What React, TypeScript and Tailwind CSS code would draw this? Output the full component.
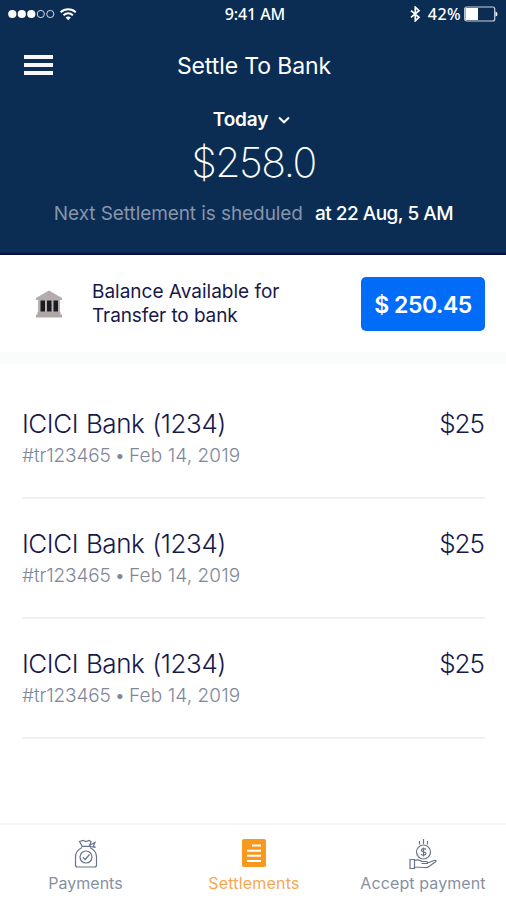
import React from "react";

const transactions = [
  { id: 1, bank: "ICICI Bank (1234)", reference: "#tr123465 •", date: "Feb 14, 2019", amount: "$25" },
  { id: 2, bank: "ICICI Bank (1234)", reference: "#tr123465 •", date: "Feb 14, 2019", amount: "$25" },
  { id: 3, bank: "ICICI Bank (1234)", reference: "#tr123465 •", date: "Feb 14, 2019", amount: "$25" },
];

function StatusBar() {
  return (
    <div className="grid h-7 grid-cols-3 items-center pr-2 pl-2 font-['Noto_Sans',sans-serif]">
      <div className="flex items-center">
        <svg width="70" height="16" viewBox="0 0 70 16" fill="none">
          <g fill="#fff">
            <circle cx="4.3" cy="8" r="4.1" />
            <circle cx="13.8" cy="8" r="4.1" />
            <circle cx="23.3" cy="8" r="4.1" />
          </g>
          <g stroke="#d5dce6" strokeWidth="1">
            <circle cx="32.8" cy="8" r="3.6" />
            <circle cx="42.3" cy="8" r="3.6" />
          </g>
          <g stroke="#fff" strokeWidth="2">
            <path d="M52.6 6.2c4.4-4 10.800-4 15.200 0" />
            <path d="M55.500 9.200c2.800-2.500 6.600-2.500 9.400 0" />
          </g>
          <path d="M57.600 11.400c1.500-1.300 3.700-1.300 5.200 0L60.200 14.300z" fill="#fff" />
        </svg>
      </div>
      <span className="pl-1 text-center text-[16px] leading-7 font-medium tracking-[-0.1px] whitespace-nowrap">9:41 AM</span>
      <div className="flex items-center justify-end">
        <svg width="11" height="16" viewBox="0 0 11 16" fill="none" stroke="#fff" strokeWidth="1.700" className="mr-[7px]">
          <path d="M1 4.600L9 11.300L5.300 14.800V1.200L9 4.600L1 11.300" />
        </svg>
        <span className="mr-[3px] text-[16px] leading-7 font-medium tracking-[0.4px]">42%</span>
        <svg width="34" height="16" viewBox="0 0 34 16" fill="none">
          <rect x="0.700" y="1" width="30" height="14" rx="2" stroke="#cbd3de" strokeWidth="1.200" />
          <rect x="1.500" y="2" width="12.500" height="12" fill="#fff" />
          <path d="M31.500 5.500q2 .5 2 2.500t-2 2.500z" fill="#fff" />
        </svg>
      </div>
    </div>
  );
}

function Header() {
  return (
    <header className="flex h-[255px] flex-col border-b-2 border-[#0a0f45] bg-[#0c2d53] text-white">
      <StatusBar />
      <div className="mt-5 grid h-9 grid-cols-[1fr_auto_1fr] items-center px-6">
        <button aria-label="Menu" className="flex w-[29px] flex-col gap-1 pb-0.5">
          <span className="h-1 bg-[#f8f8fc]" />
          <span className="h-1 bg-[#f8f8fc]" />
          <span className="h-1 bg-[#f8f8fc]" />
        </button>
        <h1 className="pl-0.5 text-[23px] leading-9 tracking-[-0.1px]">Settle To Bank</h1>
      </div>
      <button className="mt-6 flex h-6 items-center justify-center gap-[10px] pr-[3px] text-[19px] font-semibold">
        <span className="tracking-[-0.2px]">Today</span>
        <svg width="12" height="8" viewBox="0 0 12 8" fill="none" stroke="#fff" strokeWidth="2">
          <path d="M1 1.500L6 6.300L11 1.500" />
        </svg>
      </button>
      <p className="mt-[7px] pl-px text-center text-[41px] leading-[46px] font-extralight tracking-[-1.5px]">$258.0</p>
      <p className="mt-[15px] flex justify-center gap-3 pl-px text-[19px] leading-7">
        <span className="tracking-[-0.08px] text-[#8794ab]">Next Settlement is sheduled</span>
        <span className="font-medium tracking-[-0.5px]">at 22 Aug, 5 AM</span>
      </p>
    </header>
  );
}

function BankIcon() {
  return (
    <svg width="28" height="28" viewBox="0 0 28 28" className="ml-[11px]">
      <path d="M14 .5L27 8v2H1V8z" fill="#b3abac" />
      <path d="M3 10h22v14H3z" fill="#b9b1b1" />
      <path d="M5.500 10.500h4.500v11h-4.500zM12 10.500h4.500v11h-4.500zM18.500 10.500h4.500v11h-4.500z" fill="#191b20" />
      <path d="M2.500 22h23v2.500H27V27.500H1v-3h1.500z" fill="#b0a6a8" />
    </svg>
  );
}

function Balance() {
  return (
    <section className="flex h-[97px] items-center pr-[21px] pl-6">
      <BankIcon />
      <p className="ml-[29px] flex-1 text-[19px] leading-6 text-[#17194b]">
        Balance Available for
        <br />
        <span className="tracking-[-0.1px]">Transfer to bank</span>
      </p>
      <button className="h-[54px] w-[124px] rounded-[5px] bg-[#006cf7] pt-1 text-[23px] font-semibold tracking-[-0.45px] text-white">
        $ 250.45
      </button>
    </section>
  );
}

function PaymentsIcon() {
  return (
    <svg width="24" height="30" viewBox="0 0 24 30" fill="none" stroke="#67748a" strokeWidth="1.200">
      <path d="M8 7L5.500 2.500L9 1.500L12 2.500L15 1.500L17 2.500L15.500 7M7.500 7.300h9M16 6l5-2.500-1.500 3.500 2 1.500-5-1" />
      <path d="M8 8.500C4 10.500 1.500 14 1.500 18v8q0 2 2 2h17q2 0 2-2v-8c0-4-2.500-7.500-6.500-9.500" />
      <circle cx="12" cy="18" r="6" />
      <path d="M9 18.300l2.200 2.200L15.500 15.500" />
    </svg>
  );
}

function SettlementsIcon() {
  return (
    <svg width="24" height="29" viewBox="0 0 24 29" fill="none">
      <rect width="24" height="28" rx="2" fill="#f7981f" />
      <path d="M10 6.500h9M5 11.700h14M5 16.700h14M5 22h14" stroke="#fff" strokeWidth="2" />
    </svg>
  );
}

function AcceptIcon() {
  return (
    <svg width="28" height="31" viewBox="0 0 28 31" fill="none" stroke="#67748a" strokeWidth="1.200">
      <path d="M14.500 0v5M10.500 2v3.500M18.500 2v3.500" />
      <circle cx="14.500" cy="13" r="7" />
      <path d="M17 10.500c-1-1.200-4.700-1.200-4.700.7 0 2.200 4.700 1.200 4.700 3.400 0 2-3.700 2-5 .5M14.500 8.500v9" />
      <path d="M1 20.500h4.500v9H1zM5.500 21.500c3-1.500 5.500-.5 7.500 1h4q2 .3 1.500 2h-6M18.500 24l6.500-2.500q2-.3 2 1L20 27.500q-2 1.500-4.500 1l-10-.5" />
    </svg>
  );
}

function BottomNav() {
  return (
    <nav className="grid h-[77px] grid-cols-3 border-t-2 border-[#f3f4f6] pl-0.5 text-[16px] leading-5 text-[#8790a3]">
      <button className="flex flex-col items-center pt-[14px] pr-px">
        <span className="h-[34px]"><PaymentsIcon /></span>
        <span>Payments</span>
      </button>
      <button className="flex flex-col items-center pt-[14px] text-[#f5a751]">
        <span className="h-[34px]"><SettlementsIcon /></span>
        <span className="tracking-[0.2px]">Settlements</span>
      </button>
      <button className="flex flex-col items-center pt-[14px] pl-0.5">
        <span className="h-[34px]"><AcceptIcon /></span>
        <span className="tracking-[0.1px] whitespace-nowrap">Accept payment</span>
      </button>
    </nav>
  );
}

export default function App() {
  return (
    <div className="flex h-[900px] w-[506px] flex-col overflow-hidden bg-white font-['Inter',sans-serif]">
      <Header />
      <Balance />
      <div className="h-3 bg-[#fafbfb]" />
      <main className="flex-1 pt-[15px] pr-[21px] pl-[22px]">
        {transactions.map((item) => (
          <article key={item.id} className="flex h-[120px] items-start justify-between border-b-2 border-[#eff0f3] pt-[29px]">
            <div>
              <h2 className="text-[26px] leading-8 font-light tracking-[-0.45px] [word-spacing:1px] text-[#17194b]">{item.bank}</h2>
              <p className="mt-0.5 flex gap-1 text-[19px] leading-7 font-light text-[#7f8799]">
                <span className="tracking-[-0.12px] [word-spacing:-1.5px]">{item.reference}</span>
                <span className="tracking-[0.1px]">{item.date}</span>
              </p>
            </div>
            <span className="pr-px text-[26px] leading-8 font-light tracking-[-1px] text-[#17194b]">{item.amount}</span>
          </article>
        ))}
      </main>
      <BottomNav />
    </div>
  );
}
